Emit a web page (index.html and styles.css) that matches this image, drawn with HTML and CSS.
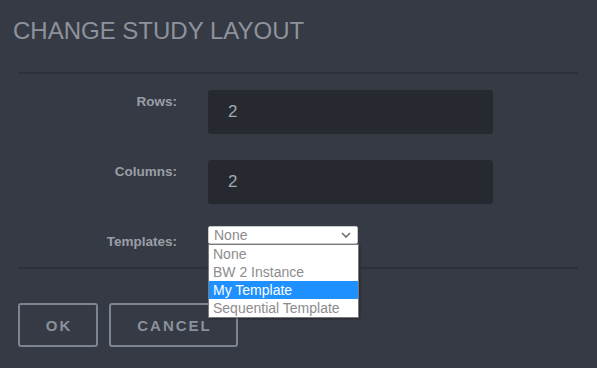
FILE: index.html
```html
<!DOCTYPE html>
<html>
<head>
    <link rel="stylesheet" href="styles.css">
</head>
<body>
    <div class="modal">
        <h1 class="title">CHANGE STUDY LAYOUT</h1>
        <div class="divider"></div>

        <form class="layoutForm">
            <label class="fieldLabel" for="rows">Rows:</label>
            <input class="textInput" type="text" id="rows" value="2">

            <label class="fieldLabel" for="columns">Columns:</label>
            <input class="textInput" type="text" id="columns" value="2">

            <label class="fieldLabel templatesLabel" for="templates">Templates:</label>
            <div class="selectWrap">
                <div class="selectBox" id="templates">
                    <span>None</span>
                    <svg class="chevron" width="10" height="6" viewBox="0 0 10 6">
                        <path d="M1 1 L5 5 L9 1" fill="none" stroke="#6d6d6d" stroke-width="1.6"/>
                    </svg>
                </div>
                <ul class="optionList">
                    <li class="option">None</li>
                    <li class="option">BW 2 Instance</li>
                    <li class="option selected">My Template</li>
                    <li class="option">Sequential Template</li>
                </ul>
            </div>
        </form>

        <div class="divider bottomDivider"></div>

        <div class="actions">
            <button type="button" class="btn okBtn">OK</button>
            <button type="button" class="btn cancelBtn">CANCEL</button>
        </div>
    </div>
</body>
</html>
```

FILE: styles.css
```css
body {
    font-family: "Liberation Sans", Arial, sans-serif;
    background-color: #363a44;
    margin: 0;
    padding: 0;
}
.modal {
    width: 597px;
    height: 368px;
}
.title {
    margin: 0;
    padding: 17px 13px 0;
    height: 55px;
    font-size: 24px;
    line-height: 28px;
    font-weight: normal;
    color: #8d939c;
}
.divider {
    height: 2px;
    margin: 0 19px 0 18px;
    background-color: #2e3139;
}
.layoutForm {
    display: grid;
    grid-template-columns: 177px 285px;
    column-gap: 31px;
    row-gap: 26px;
    padding-top: 16px;
    height: 177px;
    align-content: start;
}
.fieldLabel {
    text-align: right;
    font-size: 13.5px;
    line-height: 16px;
    font-weight: bold;
    color: #9a9fa7;
    padding-top: 4px;
}
.templatesLabel {
    padding-top: 8px;
    margin-top: -4px;
}
.textInput {
    box-sizing: border-box;
    height: 44px;
    border: none;
    border-radius: 3px;
    background-color: #272930;
    color: #a3a8b0;
    font-family: inherit;
    font-size: 17px;
    padding: 0 20px;
    outline: none;
}
.selectWrap {
    position: relative;
    margin-top: -4px;
}
.selectBox {
    box-sizing: border-box;
    width: 150px;
    height: 18px;
    background-color: #fff;
    border: 1px solid #c9c9c9;
    border-radius: 2px;
    display: flex;
    align-items: center;
    justify-content: space-between;
    padding: 0 6px 0 5px;
    font-size: 14px;
    color: #8c8c8c;
}
.chevron {
    display: block;
}
.optionList {
    position: absolute;
    top: 18px;
    left: 0;
    width: 151px;
    box-sizing: border-box;
    margin: 0;
    padding: 0;
    list-style: none;
    background-color: #fff;
    border: 1px solid #7a7a7a;
    box-shadow: 1px 1px 2px rgba(0, 0, 0, 0.3);
}
.option {
    height: 18px;
    line-height: 18px;
    padding-left: 4px;
    font-size: 14px;
    color: #8c8c8c;
    white-space: nowrap;
}
.option.selected {
    background-color: #1e90ff;
    color: #fff;
}
.actions {
    display: flex;
    gap: 11px;
    padding: 34px 18px 0;
}
.btn {
    height: 44px;
    background: transparent;
    border: 2px solid #7d8590;
    border-radius: 3px;
    font-family: inherit;
    font-size: 15px;
    font-weight: bold;
    letter-spacing: 2px;
    color: #8b919b;
    padding: 0 0 0 2px;
}
.okBtn {
    width: 80px;
}
.cancelBtn {
    width: 129px;
}
```
